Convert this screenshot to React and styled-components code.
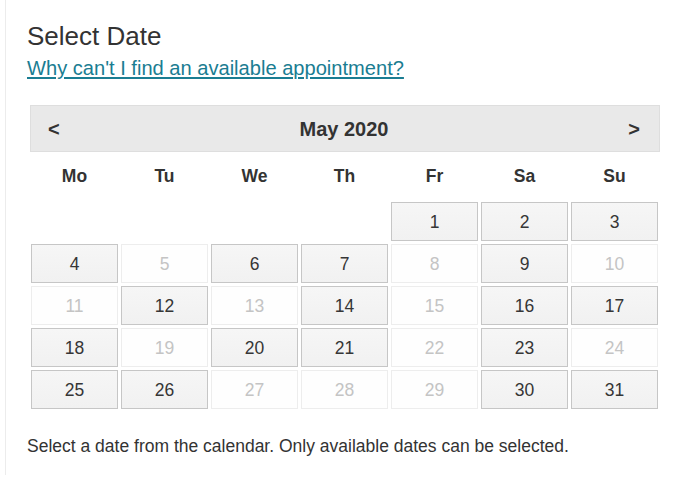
import React from "react";
import styled, { createGlobalStyle } from "styled-components";

const GlobalStyles = createGlobalStyle`
  body {
    margin: 0;
    background: #ffffff;
    font-family: "Liberation Sans", Arial, sans-serif;
    color: #333333;
  }
`;

const Page = styled.div`
  margin-left: 5px;
  min-height: 475px;
  box-sizing: border-box;
  border-left: 1px solid #ececec;
  padding: 21px 0 0 21px;
`;

const Title = styled.h2`
  margin: 0;
  font-size: 26px;
  line-height: 30px;
  font-weight: normal;
  color: #333333;
`;

const HelpLink = styled.a`
  display: inline-block;
  margin-top: 5px;
  font-size: 20.1px;
  line-height: 24px;
  color: #1a7d92;
  text-decoration: underline;
  cursor: pointer;
`;

const Calendar = styled.div`
  width: 630px;
  margin: 25px 0 0 3px;
`;

const MonthBar = styled.div`
  display: flex;
  align-items: center;
  justify-content: space-between;
  box-sizing: border-box;
  height: 47px;
  padding: 2px 19px 0 17px;
  background: #e9e9e9;
  border: 1px solid #dedede;
  font-weight: bold;
  color: #333333;
`;

const NavButton = styled.span`
  font-size: 20px;
  cursor: pointer;
`;

const MonthLabel = styled.span`
  font-size: 20px;
`;

const Grid = styled.div`
  display: grid;
  grid-template-columns: repeat(7, 87px);
  column-gap: 3px;
  row-gap: 3px;
  padding-left: 1px;
`;

const DayName = styled.div`
  box-sizing: border-box;
  height: 47px;
  padding-top: 2px;
  display: flex;
  align-items: center;
  justify-content: center;
  font-size: 17.5px;
  font-weight: bold;
  color: #333333;
`;

const Day = styled.div`
  box-sizing: border-box;
  height: 39px;
  padding-top: 1px;
  display: flex;
  align-items: center;
  justify-content: center;
  font-size: 17.5px;
  border: 1px solid ${(p) => (p.$open ? "#c6c6c6" : "#ededed")};
  background: ${(p) =>
    p.$open ? "linear-gradient(#f6f6f6, #f1f1f1)" : "#fefefe"};
  color: ${(p) => (p.$open ? "#363636" : "#c4c4c4")};
  cursor: ${(p) => (p.$open ? "pointer" : "default")};
`;

const Weeks = styled(Grid)`
  margin-top: 3px;
`;

const Note = styled.p`
  margin: 26px 0 0;
  font-size: 17.5px;
  line-height: 22px;
  color: #333333;
`;

const dayNames = ["Mo", "Tu", "We", "Th", "Fr", "Sa", "Su"];
const closed = [5, 8, 10, 11, 13, 15, 19, 22, 24, 27, 28, 29];
// May 2020 starts on a Friday
const leading = 4;

function App() {
  const days = [];
  for (let i = 0; i < leading; i++) days.push(<div key={"e" + i} />);
  for (let d = 1; d <= 31; d++) {
    days.push(
      <Day key={d} $open={!closed.includes(d)}>
        {d}
      </Day>
    );
  }

  return (
    <>
      <GlobalStyles />
      <Page>
        <Title>Select Date</Title>
        <HelpLink>Why can't I find an available appointment?</HelpLink>
        <Calendar>
          <MonthBar>
            <NavButton>&lt;</NavButton>
            <MonthLabel>May 2020</MonthLabel>
            <NavButton>&gt;</NavButton>
          </MonthBar>
          <Grid>
            {dayNames.map((n) => (
              <DayName key={n}>{n}</DayName>
            ))}
          </Grid>
          <Weeks>{days}</Weeks>
        </Calendar>
        <Note>
          Select a date from the calendar. Only available dates can be
          selected.
        </Note>
      </Page>
    </>
  );
}

export default App;
